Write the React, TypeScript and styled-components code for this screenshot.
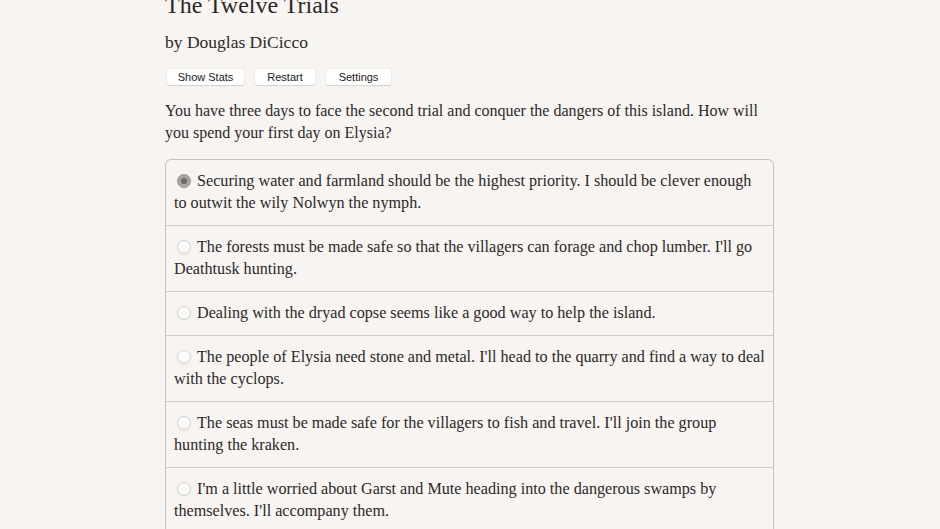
import React from "react";
import styled, { createGlobalStyle } from "styled-components";

const Global = createGlobalStyle`
  html, body {
    margin: 0;
    padding: 0;
    background: #f7f4f1;
    overflow: hidden;
  }
  body {
    font-family: "Liberation Serif", "Times New Roman", serif;
    color: #2c2a28;
  }
`;

const Page = styled.main`
  width: 609px;
  margin-left: 165px;
  display: flex;
  flex-direction: column;
`;

const Title = styled.h1`
  margin: -9px 0 0;
  font-size: 24px;
  line-height: 28px;
  font-weight: normal;
`;

const Byline = styled.h2`
  margin: 11px 0 0;
  font-size: 17.5px;
  line-height: 24px;
  font-weight: normal;
`;

const Toolbar = styled.nav`
  display: flex;
  gap: 11px;
  margin: 15px 0 0 2px;
`;

const ToolButton = styled.button<{ $w: number }>`
  width: ${(p) => p.$w}px;
  height: 16px;
  padding: 0;
  border: none;
  border-radius: 2px;
  background: #ffffff;
  box-shadow: 0 1px 1px rgba(0, 0, 0, 0.12), 0 0 0 0.5px rgba(0, 0, 0, 0.06);
  font-family: "Liberation Sans", Arial, sans-serif;
  font-size: 11px;
  line-height: 16px;
  color: #222;
`;

const Prose = styled.p`
  margin: 15px 0 0;
  font-size: 16px;
  line-height: 22px;
`;

const Choices = styled.form`
  margin-top: 15px;
  border: 1px solid #c6c2be;
  border-bottom: none;
  border-radius: 6px 6px 0 0;
  display: flex;
  flex-direction: column;
`;

const Choice = styled.label`
  display: block;
  padding: 10px 8px 11px;
  font-size: 16.16px;
  line-height: 22px;
  border-top: 1px solid #cfcac6;
  &:first-child {
    border-top: none;
  }
`;

const Radio = styled.span<{ $on?: boolean }>`
  display: inline-block;
  box-sizing: border-box;
  width: 14px;
  height: 14px;
  margin: 0 6px 0 3px;
  vertical-align: -2px;
  border-radius: 50%;
  border: 1px solid ${(p) => (p.$on ? "#9a9794" : "#d4d1ce")};
  box-shadow: 0 0.5px 1px rgba(0, 0, 0, 0.08);
  background: ${(p) =>
    p.$on
      ? "radial-gradient(circle, #6f6d6b 0 2.8px, #a9a6a3 3.3px)"
      : "linear-gradient(#ffffff, #f8f7f6)"};
`;

const options = [
  "Securing water and farmland should be the highest priority. I should be clever enough to outwit the wily Nolwyn the nymph.",
  "The forests must be made safe so that the villagers can forage and chop lumber. I'll go Deathtusk hunting.",
  "Dealing with the dryad copse seems like a good way to help the island.",
  "The people of Elysia need stone and metal. I'll head to the quarry and find a way to deal with the cyclops.",
  "The seas must be made safe for the villagers to fish and travel. I'll join the group hunting the kraken.",
  "I'm a little worried about Garst and Mute heading into the dangerous swamps by themselves. I'll accompany them.",
];

export default function App() {
  return (
    <>
      <Global />
      <Page>
        <Title>The Twelve Trials</Title>
        <Byline>by Douglas DiCicco</Byline>
        <Toolbar>
          <ToolButton $w={77}>Show Stats</ToolButton>
          <ToolButton $w={60}>Restart</ToolButton>
          <ToolButton $w={65}>Settings</ToolButton>
        </Toolbar>
        <Prose>
          You have three days to face the second trial and conquer the dangers
          of this island. How will you spend your first day on Elysia?
        </Prose>
        <Choices>
          {options.map((text, i) => (
            <Choice key={i}>
              <Radio $on={i === 0} />
              {text}
            </Choice>
          ))}
        </Choices>
      </Page>
    </>
  );
}
